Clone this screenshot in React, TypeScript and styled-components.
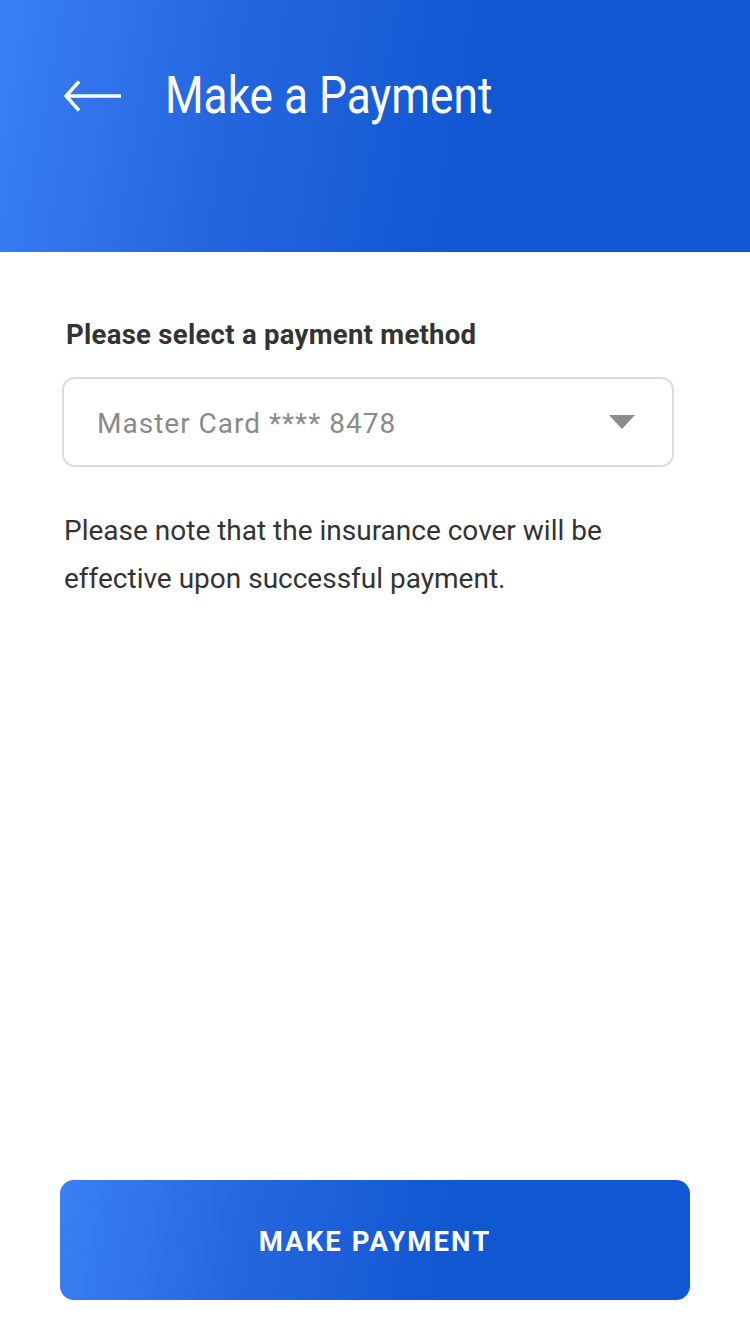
import React from "react";
import styled, { createGlobalStyle } from "styled-components";

const Global = createGlobalStyle`
  html, body { margin: 0; padding: 0; background: #ffffff; }
  body { font-family: Roboto, "Noto Sans", sans-serif; -webkit-font-smoothing: antialiased; }
  * { box-sizing: border-box; }
`;

const Page = styled.div`
  width: 750px;
  height: 1334px;
  display: flex;
  flex-direction: column;
  background: #ffffff;
`;

const Header = styled.header`
  height: 252px;
  flex-shrink: 0;
  background: linear-gradient(100deg, #3a7ff4 0%, #2566df 30%, #1157d2 62%, #1157d2 100%);
  display: flex;
  align-items: flex-start;
  padding: 70px 0 0 64px;
`;

const BackButton = styled.button`
  width: 58px;
  height: 52px;
  padding: 0;
  border: none;
  background: none;
  display: flex;
  align-items: center;
  cursor: pointer;
`;

const Title = styled.h1`
  margin: 0 0 0 43px;
  font-family: Roboto, sans-serif;
  font-weight: 400;
  font-size: 52px;
  line-height: 52px;
  color: #ffffff;
  display: inline-block;
  transform: scaleX(0.85);
  transform-origin: left center;
  white-space: nowrap;
`;

const Content = styled.main`
  flex: 1;
  display: flex;
  flex-direction: column;
  padding: 66px 76px 0 62px;
`;

const Label = styled.label`
  font-family: Roboto, sans-serif;
  font-weight: 700;
  font-size: 27.5px;
  line-height: 34px;
  letter-spacing: 0.28px;
  color: #333333;
  margin-left: 4px;
`;

const Select = styled.div`
  margin-top: 25px;
  height: 90px;
  border: 2px solid #dcdcdc;
  border-radius: 13px;
  display: flex;
  align-items: center;
  justify-content: space-between;
  padding: 0 36px 0 33px;
`;

const SelectValue = styled.span`
  font-family: Roboto, sans-serif;
  font-size: 28px;
  letter-spacing: 1px;
  padding-top: 2px;
  color: #8a8a8a;
`;

const Note = styled.p`
  margin: 40px 0 0 2px;
  font-family: Roboto, sans-serif;
  font-size: 28px;
  line-height: 48px;
  color: #333333;
`;

const Footer = styled.div`
  padding: 0 60px 34px 60px;
`;

const PayButton = styled.button`
  width: 100%;
  height: 120px;
  border: none;
  border-radius: 14px;
  background: linear-gradient(100deg, #3a7ff4 0%, #2566df 30%, #1157d2 62%, #1157d2 100%);
  color: #ffffff;
  font-family: Roboto, sans-serif;
  font-weight: 700;
  font-size: 27.5px;
  letter-spacing: 2.1px;
  padding-top: 4px;
  cursor: pointer;
`;

export default function App() {
  return (
    <>
      <Global />
      <Page>
        <Header>
          <BackButton aria-label="Back">
            <svg width="58" height="34" viewBox="0 0 58 34" fill="none">
              <path d="M1.5 17H57" stroke="#ffffff" strokeWidth="3.4" />
              <path d="M15 2.5L2 17L15 31.5" stroke="#ffffff" strokeWidth="3.4" strokeLinejoin="miter" />
            </svg>
          </BackButton>
          <Title>Make a Payment</Title>
        </Header>
        <Content>
          <Label>Please select a payment method</Label>
          <Select>
            <SelectValue>Master Card **** 8478</SelectValue>
            <svg width="28" height="16" viewBox="0 0 28 16">
              <path d="M1 1H27L14 15Z" fill="#8c8c8c" />
            </svg>
          </Select>
          <Note>
            Please note that the insurance cover will be
            <br />
            effective upon successful payment.
          </Note>
        </Content>
        <Footer>
          <PayButton>MAKE PAYMENT</PayButton>
        </Footer>
      </Page>
    </>
  );
}
